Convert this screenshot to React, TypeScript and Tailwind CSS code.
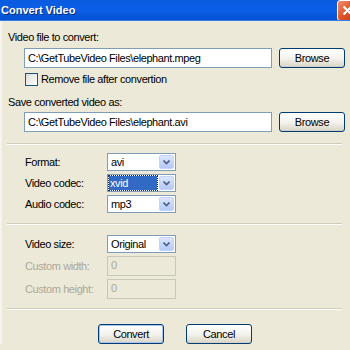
import React from 'react';

const font = { fontFamily: '"Liberation Sans", Arial, sans-serif' };

function Chevron() {
  return (
    <svg width="7" height="5" viewBox="0 0 7 5" className="block">
      <path d="M0.5 0.5 L3.5 3.5 L6.5 0.5" fill="none" stroke="#4d6185" strokeWidth="1.6" />
    </svg>
  );
}

function Select({ value, selected }: { value: string; selected?: boolean }) {
  return (
    <div className="flex h-[18px] w-[69px] border border-[#7f9db9] bg-white p-[1px]">
      <div className="flex-1 flex items-center">
        <span
          className={
            selected
              ? 'h-full w-[48px] bg-[#316ac5] text-white pl-[1px] leading-[14px] outline outline-1 outline-dotted outline-[#0b2a66]'
              : 'pl-[2px] text-black leading-[14px]'
          }
        >
          {value}
        </span>
      </div>
      <div className="w-[15px] h-full flex items-center justify-center rounded-[2px] bg-gradient-to-b from-[#dce7fd] to-[#b4c8f6] border border-[#c3d3fd]">
        <Chevron />
      </div>
    </div>
  );
}

function XpButton({ label, def }: { label: string; def?: boolean }) {
  return (
    <div
      className={
        'h-[20px] w-[66px] rounded-[3px] border border-[#003c74] flex items-center justify-center text-black bg-gradient-to-b from-[#ffffff] via-[#f4f3ee] to-[#d8d4c6] ' +
        (def ? 'shadow-[inset_0_0_0_1px_#a8c4f0]' : 'shadow-[inset_0_-1px_0_0_#d6d0c5]')
      }
    >
      {label}
    </div>
  );
}

function Separator() {
  return (
    <div className="mx-[5px] w-[335px]">
      <div className="h-px bg-[#d0cdbd]" />
      <div className="h-px bg-white" />
    </div>
  );
}

function Row({ label, children, disabled }: { label: string; children: React.ReactNode; disabled?: boolean }) {
  return (
    <div className="flex items-center">
      <div className={'w-[105px] pl-[23px] whitespace-nowrap ' + (disabled ? 'text-[#aca899]' : 'text-black')}>{label}</div>
      {children}
    </div>
  );
}

function DisabledBox() {
  return (
    <div className="h-[20px] w-[69px] border border-[#c9c7ba] bg-[#ece9d8] pl-[3px] leading-[16px] text-[#aca899]">0</div>
  );
}

export default function App() {
  return (
    <div className="w-[350px] h-[350px] overflow-hidden bg-[#ece9d8] flex flex-col text-[11px] tracking-[-0.4px]" style={font}>
      {/* title bar */}
      <div className="h-[21px] shrink-0 flex items-center justify-between overflow-hidden bg-gradient-to-b from-[#0a5be0] via-[#0b5fe6] to-[#0550d0] border-b border-[#3b7de8]">
        <span className="pl-[1px] text-[11px] font-bold text-white tracking-[0px] [text-shadow:1px_1px_0_#0a2a7a]">Convert Video</span>
        <div className="w-[21px] h-[21px] mr-[-8px] rounded-[3px] border border-white bg-gradient-to-br from-[#f08c6c] via-[#e2532c] to-[#c23a14] flex items-center justify-center">
          <svg width="11" height="11" viewBox="0 0 11 11">
            <path d="M1.5 1.5 L9.5 9.5 M9.5 1.5 L1.5 9.5" stroke="white" strokeWidth="2.2" />
          </svg>
        </div>
      </div>

      <div className="flex flex-col border-l-2 border-[#f6f4ec]">
        <div className="mt-[9px] pl-[6px] leading-[14px] text-black">Video file to convert:</div>
        <div className="mt-[4px] flex items-center">
          <div className="ml-[22px] h-[20px] w-[248px] border border-[#7f9db9] bg-white pl-[3px] leading-[18px] text-black">
            C:\GetTubeVideo Files\elephant.mpeg
          </div>
          <div className="ml-[7px]">
            <XpButton label="Browse" />
          </div>
        </div>
        <div className="mt-[5px] ml-[23px] flex items-center gap-[3px]">
          <div className="w-[13px] h-[13px] border border-[#1c5180] bg-gradient-to-br from-[#dcdcd7] to-[#ffffff]" />
          <span className="leading-[13px] text-black">Remove file after convertion</span>
        </div>
        <div className="mt-[9px] pl-[6px] leading-[14px] text-black">Save converted video as:</div>
        <div className="mt-[3px] flex items-center">
          <div className="ml-[22px] h-[20px] w-[248px] border border-[#7f9db9] bg-white pl-[3px] leading-[18px] text-black">
            C:\GetTubeVideo Files\elephant.avi
          </div>
          <div className="ml-[7px]">
            <XpButton label="Browse" />
          </div>
        </div>

        <div className="mt-[11px]">
          <Separator />
        </div>

        <div className="mt-[8px] flex flex-col gap-[3px]">
          <Row label="Format:">
            <Select value="avi" />
          </Row>
          <Row label="Video codec:">
            <Select value="xvid" selected />
          </Row>
          <Row label="Audio codec:">
            <Select value="mp3" />
          </Row>
        </div>

        <div className="mt-[10px]">
          <Separator />
        </div>

        <div className="mt-[10px] flex flex-col gap-[3px]">
          <Row label="Video size:">
            <Select value="Original" />
          </Row>
          <Row label="Custom width:" disabled>
            <DisabledBox />
          </Row>
          <Row label="Custom height:" disabled>
            <DisabledBox />
          </Row>
        </div>

        <div className="mt-[9px]">
          <Separator />
        </div>

        <div className="mt-[14px] flex justify-center gap-[22px] pr-[2px]">
          <XpButton label="Convert" def />
          <XpButton label="Cancel" />
        </div>
      </div>
    </div>
  );
}
